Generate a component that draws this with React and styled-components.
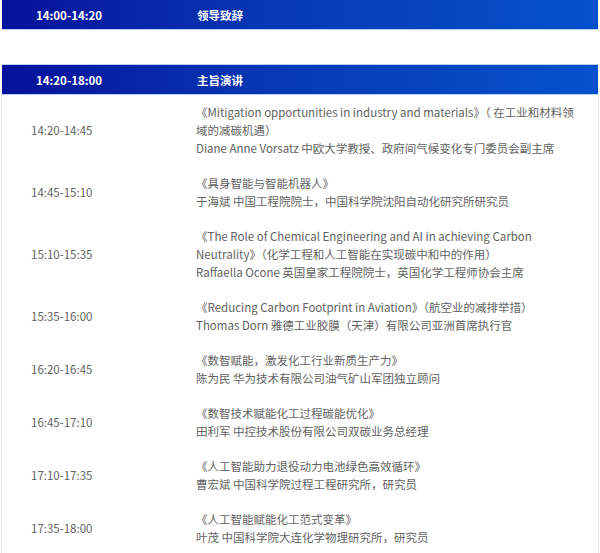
import styled, { createGlobalStyle } from "styled-components";

const GlobalStyle = createGlobalStyle`
  html, body {
    margin: 0;
    padding: 0;
    background: #ffffff;
  }
  body {
    font-family: "Noto Sans CJK SC", "Noto Sans", sans-serif;
  }
`;

const talks = [
  {
    time: "14:20-14:45",
    title: [
      "《Mitigation opportunities in industry and materials》（ 在工业和材料领",
      "域的减碳机遇）",
    ],
    speaker: "Diane Anne Vorsatz 中欧大学教授、政府间气候变化专门委员会副主席",
  },
  {
    time: "14:45-15:10",
    title: ["《具身智能与智能机器人》"],
    speaker: "于海斌 中国工程院院士，中国科学院沈阳自动化研究所研究员",
  },
  {
    time: "15:10-15:35",
    title: [
      "《The Role of Chemical Engineering and AI in achieving Carbon",
      "Neutrality》（化学工程和人工智能在实现碳中和中的作用）",
    ],
    speaker: "Raffaella Ocone 英国皇家工程院院士，英国化学工程师协会主席",
  },
  {
    time: "15:35-16:00",
    title: ["《Reducing Carbon Footprint in Aviation》（航空业的减排举措）"],
    speaker: "Thomas Dorn 雅德工业胶膜（天津）有限公司亚洲首席执行官",
  },
  {
    time: "16:20-16:45",
    title: ["《数智赋能，激发化工行业新质生产力》"],
    speaker: "陈为民 华为技术有限公司油气矿山军团独立顾问",
  },
  {
    time: "16:45-17:10",
    title: ["《数智技术赋能化工过程碳能优化》"],
    speaker: "田利军 中控技术股份有限公司双碳业务总经理",
  },
  {
    time: "17:10-17:35",
    title: ["《人工智能助力退役动力电池绿色高效循环》"],
    speaker: "曹宏斌 中国科学院过程工程研究所，研究员",
  },
  {
    time: "17:35-18:00",
    title: ["《人工智能赋能化工范式变革》"],
    speaker: "叶茂 中国科学院大连化学物理研究所，研究员",
  },
];

const App = () => {
  return (
    <>
      <GlobalStyle />
      <Schedule>
        <Bar>
          <BarTime>14:00-14:20</BarTime>
          <BarLabel>领导致辞</BarLabel>
        </Bar>
        <Spacer />
        <Bar>
          <BarTime>14:20-18:00</BarTime>
          <BarLabel>主旨演讲</BarLabel>
        </Bar>
        <Talks>
          {talks.map((t) => (
            <TalkRow key={t.time}>
              <TalkTime>{t.time}</TalkTime>
              <TalkBody>
                {t.title.map((line, i) => (
                  <Line key={i}>{line}</Line>
                ))}
                <Line>{t.speaker}</Line>
              </TalkBody>
            </TalkRow>
          ))}
        </Talks>
      </Schedule>
    </>
  );
};

const Schedule = styled.div`
  width: 600px;
  box-sizing: border-box;
  padding: 0 2px;
`;

const Bar = styled.div`
  display: grid;
  grid-template-columns: 195px 1fr;
  align-items: center;
  height: 29px;
  background: linear-gradient(90deg, #06129a 0%, #0838b4 45%, #0552cc 100%);
  box-shadow: 0 1px 0 #b9cff2, 0 -1px 0 #b9cff2;
  color: #ffffff;
  font-size: 11.5px;
  font-weight: 700;
`;

const BarTime = styled.div`
  padding-left: 34px;
`;

const BarLabel = styled.div`
  letter-spacing: 0;
`;

const Spacer = styled.div`
  height: 36px;
`;

const Talks = styled.div`
  border-left: 1px solid #ececec;
  border-right: 1px solid #ececec;
  margin: 0 -1px;
`;

const TalkRow = styled.div`
  display: grid;
  grid-template-columns: 194px 1fr;
  align-items: center;
  padding: 9px 0 8px;
  color: #626262;
  font-size: 11.5px;
  line-height: 18px;
`;

const TalkTime = styled.div`
  padding-left: 29px;
`;

const TalkBody = styled.div`
  white-space: nowrap;
`;

const Line = styled.div``;

export default App;
